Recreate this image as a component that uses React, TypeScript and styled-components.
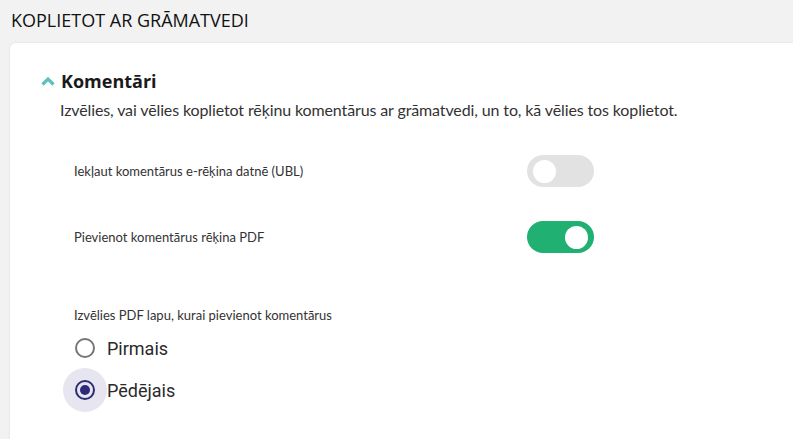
import { useState } from "react";
import styled, { createGlobalStyle } from "styled-components";

const GlobalStyle = createGlobalStyle`
  html, body {
    margin: 0;
    padding: 0;
    background: #f2f2f2;
  }
  * { box-sizing: border-box; }
`;

const Page = styled.div`
  width: 793px;
  height: 439px;
  overflow: hidden;
  background: #f2f2f2;
  padding: 0 0 0 10px;
`;

const PageTitle = styled.h1`
  margin: 0;
  padding: 8px 0 0 1px;
  height: 43px;
  font-family: "Open Sans", sans-serif;
  font-weight: 400;
  font-size: 18px;
  color: #111;
`;

const Card = styled.div`
  background: #fff;
  border-radius: 6px 0 0 0;
  box-shadow: 0 0 3px rgba(0, 0, 0, 0.08);
  height: 420px;
  padding: 26px 0 0 31px;
`;

const SectionHeader = styled.button`
  display: flex;
  align-items: center;
  gap: 6px;
  border: none;
  background: none;
  padding: 0;
  cursor: pointer;
  font-family: "Open Sans", sans-serif;
  font-weight: 700;
  font-size: 18px;
  color: #1a1a1a;
`;

const Description = styled.p`
  margin: 7px 0 0 19px;
  font-family: Lato, sans-serif;
  font-size: 16px;
  letter-spacing: -0.12px;
  color: #333;
`;

const Options = styled.div`
  margin: 36px 0 0 33px;
  width: 520px;
  display: flex;
  flex-direction: column;
  gap: 34px;
`;

const OptionRow = styled.label`
  display: flex;
  align-items: center;
  justify-content: space-between;
  font-family: "Source Sans Pro", Lato, sans-serif;
  font-size: 13px;
  color: #333;
  cursor: pointer;
`;

const Track = styled.span<{ $on: boolean }>`
  position: relative;
  width: 67px;
  height: 32px;
  border-radius: 16px;
  background: ${(p) => (p.$on ? "#20b072" : "#e2e2e2")};
  transition: background 0.2s;
`;

const Knob = styled.span<{ $on: boolean }>`
  position: absolute;
  top: 5px;
  left: ${(p) => (p.$on ? "38px" : "6px")};
  width: 23px;
  height: 23px;
  border-radius: 50%;
  background: #fff;
  transition: left 0.2s;
`;

const RadioGroup = styled.div`
  margin: 54px 0 0 33px;
  display: flex;
  flex-direction: column;
`;

const GroupLabel = styled.div`
  font-family: "Source Sans Pro", Lato, sans-serif;
  font-size: 13px;
  color: #333;
  margin-bottom: 4px;
`;

const RadioRow = styled.label`
  display: flex;
  align-items: center;
  height: 42px;
  margin-left: -11px;
  cursor: pointer;
  font-family: Roboto, sans-serif;
  font-size: 18px;
  color: #2a2a2a;
`;

const RadioHalo = styled.span<{ $checked: boolean }>`
  width: 44px;
  height: 44px;
  border-radius: 50%;
  display: flex;
  align-items: center;
  justify-content: center;
  background: ${(p) => (p.$checked ? "#e7e5ef" : "transparent")};
`;

const RadioCircle = styled.span<{ $checked: boolean }>`
  width: 20px;
  height: 20px;
  border-radius: 50%;
  border: 2px solid ${(p) => (p.$checked ? "#2d2a78" : "#767676")};
  display: flex;
  align-items: center;
  justify-content: center;
  &::after {
    content: "";
    width: 10px;
    height: 10px;
    border-radius: 50%;
    background: ${(p) => (p.$checked ? "#2d2a78" : "transparent")};
  }
`;

const Chevron = () => (
  <svg width="14" height="10" viewBox="0 0 14 10">
    <path d="M1.5 8.5 L7 3 L12.5 8.5" fill="none" stroke="#5cc2bd" strokeWidth="3.2" />
  </svg>
);

export default function App() {
  const [ubl, setUbl] = useState(false);
  const [pdf, setPdf] = useState(true);
  const [page, setPage] = useState("last");

  return (
    <Page>
      <GlobalStyle />
      <PageTitle>KOPLIETOT AR GRĀMATVEDI</PageTitle>
      <Card>
        <SectionHeader>
          <Chevron />
          Komentāri
        </SectionHeader>
        <Description>
          Izvēlies, vai vēlies koplietot rēķinu komentārus ar grāmatvedi, un to, kā vēlies tos koplietot.
        </Description>
        <Options>
          <OptionRow onClick={() => setUbl(!ubl)}>
            Iekļaut komentārus e-rēķina datnē (UBL)
            <Track $on={ubl}>
              <Knob $on={ubl} />
            </Track>
          </OptionRow>
          <OptionRow onClick={() => setPdf(!pdf)}>
            Pievienot komentārus rēķina PDF
            <Track $on={pdf}>
              <Knob $on={pdf} />
            </Track>
          </OptionRow>
        </Options>
        <RadioGroup>
          <GroupLabel>Izvēlies PDF lapu, kurai pievienot komentārus</GroupLabel>
          <RadioRow onClick={() => setPage("first")}>
            <RadioHalo $checked={page === "first"}>
              <RadioCircle $checked={page === "first"} />
            </RadioHalo>
            Pirmais
          </RadioRow>
          <RadioRow onClick={() => setPage("last")}>
            <RadioHalo $checked={page === "last"}>
              <RadioCircle $checked={page === "last"} />
            </RadioHalo>
            Pēdējais
          </RadioRow>
        </RadioGroup>
      </Card>
    </Page>
  );
}
